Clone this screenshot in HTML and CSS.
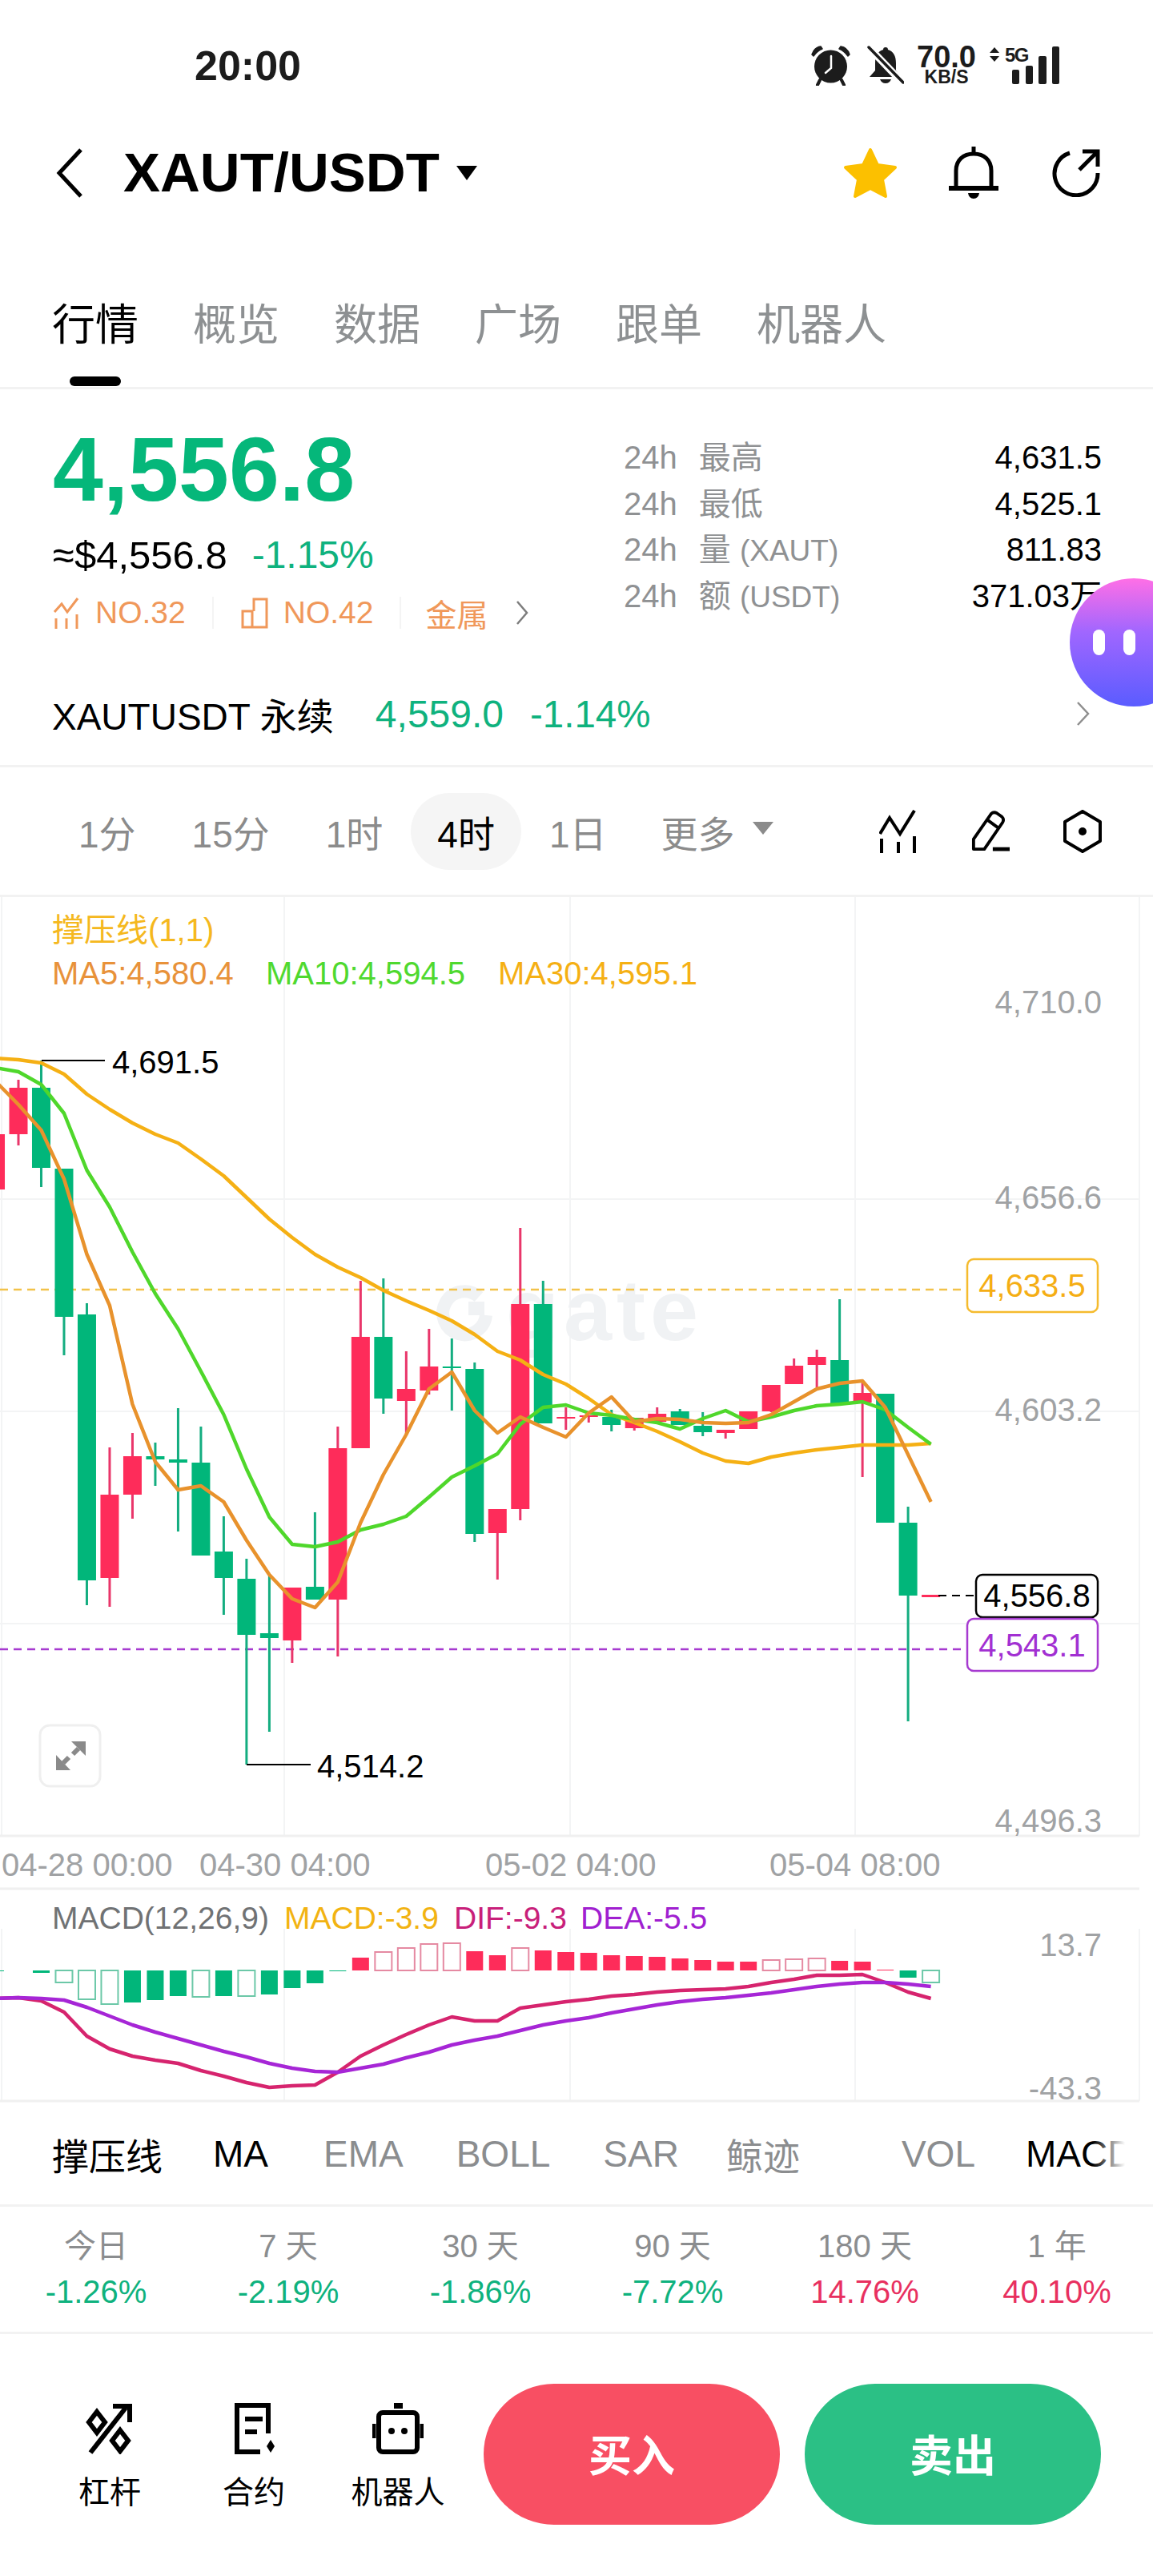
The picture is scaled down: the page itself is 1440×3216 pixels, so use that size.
FILE: index.html
```html
<!DOCTYPE html>
<html lang="zh-CN">
  <head>
    <meta charset="UTF-8">
    <meta name="viewport" content="width=device-width, initial-scale=1.0">
    <title>XAUT/USDT</title>
    <link rel="stylesheet" href="styles.css">
  </head>
  <body>
    <div class="status-bar">
      <span class="time">20:00</span>
      <div class="status-icons">
        <svg class="alarm-icon" viewBox="0 0 50 50">
          <circle cx="24.5" cy="26" r="20.5" fill="#1c1c1c"/>
          <path d="M25 13V28L18 34" fill="none" stroke="#fff" stroke-width="2.5" stroke-linecap="round"/>
          <path d="M1 11Q4 2 12 1L14 4Q8 6 3 13ZM48 11Q45 2 37 1L35 4Q41 6 46 13Z" fill="#1c1c1c" stroke="#1c1c1c" stroke-width="1.5" stroke-linejoin="round"/>
          <path d="M11 43L8 49M38 43L41 49" stroke="#1c1c1c" stroke-width="4" stroke-linecap="round"/>
        </svg>
        <svg class="muted-icon" viewBox="0 0 46 48">
          <path d="M23 2C25 2 26 3 26 5C33 7 36 13 36 22V31L42 39H3L10 31V22C10 13 13 7 20 5C20 3 21 2 23 2Z" fill="#1c1c1c"/>
          <path d="M16 42H30Q28 47 23 47Q18 47 16 42Z" fill="#1c1c1c"/>
          <path d="M0 0L44 46" stroke="#fff" stroke-width="9"/>
          <path d="M2 2L45 46" stroke="#1c1c1c" stroke-width="3.5" stroke-linecap="round"/>
        </svg>
        <div class="net-speed">
          <span class="net-value">70.0</span>
          <span class="net-unit">KB/S</span>
        </div>
        <svg class="net-arrows" viewBox="0 0 12 18">
          <path d="M6 0L12 7H0ZM6 18L12 11H0Z" fill="#1c1c1c"/>
        </svg>
        <svg class="signal-icon" viewBox="0 0 70 51">
          <text class="signal-label" x="0" y="23">5G</text>
          <rect x="9" y="33" width="9" height="18" rx="2"/>
          <rect x="26" y="28" width="9" height="23" rx="2"/>
          <rect x="42" y="16" width="10" height="35" rx="2"/>
          <rect x="59" y="4" width="9" height="47" rx="2"/>
        </svg>
      </div>
    </div>

    <div class="nav">
      <svg class="back-icon" viewBox="0 0 34 62">
        <path d="M31 2L4 31L31 60" fill="none" stroke="#000" stroke-width="5"/>
      </svg>
      <h1 class="pair">XAUT/USDT</h1>
      <svg class="pair-caret" viewBox="0 0 26 18"><path d="M0 0H26L13 18Z" fill="#000"/></svg>
      <div class="nav-actions">
        <svg class="star-icon" viewBox="0 0 68 64">
          <path d="M34 3L43 22L65 25L49 40L53 61L34 51L15 61L19 40L3 25L25 22Z" fill="#fcc000" stroke="#fcc000" stroke-width="4" stroke-linejoin="round"/>
        </svg>
        <svg class="bell-icon" viewBox="0 0 62 66">
          <path d="M31 0V10M9 52V30C9 17 18 9 31 9C44 9 53 17 53 30V52" fill="none" stroke="#000" stroke-width="5"/>
          <path d="M0 49H62V55H0ZM24 58H38Q37 65 31 65Q25 65 24 58Z" fill="#000"/>
        </svg>
        <svg class="share-icon" viewBox="0 0 60 60">
          <path d="M22 5A27 27 0 1 0 57 30" fill="none" stroke="#000" stroke-width="5"/>
          <path d="M34 26L56 4M38 3H57V22" fill="none" stroke="#000" stroke-width="5"/>
        </svg>
      </div>
    </div>

    <div class="tabs">
      <div class="tab tab-active">行情<span class="tab-mark"></span></div>
      <div class="tab">概览</div>
      <div class="tab">数据</div>
      <div class="tab">广场</div>
      <div class="tab">跟单</div>
      <div class="tab">机器人</div>
    </div>

    <div class="summary">
      <div class="summary-left">
        <div class="price">4,556.8</div>
        <div class="price-sub">
          <span>≈$4,556.8</span>
          <span class="up-text price-change">-1.15%</span>
        </div>
        <div class="rank-tags">
          <svg class="rank-icon" viewBox="0 0 34 40">
            <path d="M2 19L11 9L18 19L31 2" fill="none" stroke="#f0985a" stroke-width="3"/>
            <path d="M4 27V40M17 27V40M30 22V40" stroke="#f0985a" stroke-width="3"/>
          </svg>
          <span class="rank-no">NO.32</span>
          <span class="rank-sep"></span>
          <svg class="rank-icon" viewBox="0 0 34 40">
            <path d="M2 38V18H14V38ZM14 38H32V3H16V18" fill="none" stroke="#f0985a" stroke-width="3"/>
          </svg>
          <span class="rank-no">NO.42</span>
          <span class="rank-sep"></span>
          <span class="rank-name">金属</span>
          <svg class="rank-chevron" viewBox="0 0 16 32">
            <path d="M2 2L14 16L2 30" fill="none" stroke="#7d7d7d" stroke-width="2.5"/>
          </svg>
        </div>
      </div>
      <div class="summary-right">
        <div class="stat-row"><span class="stat-period">24h</span><span class="stat-name">最高</span><span class="stat-value">4,631.5</span></div>
        <div class="stat-row"><span class="stat-period">24h</span><span class="stat-name">最低</span><span class="stat-value">4,525.1</span></div>
        <div class="stat-row"><span class="stat-period">24h</span><span class="stat-name">量 <span class="stat-unit">(XAUT)</span></span><span class="stat-value">811.83</span></div>
        <div class="stat-row"><span class="stat-period">24h</span><span class="stat-name">额 <span class="stat-unit">(USDT)</span></span><span class="stat-value">371.03万</span></div>
      </div>
      <div class="assistant">
        <span class="assistant-eye"></span>
        <span class="assistant-eye"></span>
      </div>
    </div>

    <div class="perp-row">
      <span class="perp-name">XAUTUSDT 永续</span>
      <span class="perp-price">4,559.0</span>
      <span class="perp-change">-1.14%</span>
      <svg class="perp-chevron" viewBox="0 0 18 30">
        <path d="M2 1L15 15L2 29" fill="none" stroke="#8f8f8f" stroke-width="2.5"/>
      </svg>
    </div>

    <div class="intervals">
      <span class="interval">1分</span>
      <span class="interval">15分</span>
      <span class="interval">1时</span>
      <span class="interval interval-active">4时</span>
      <span class="interval">1日</span>
      <span class="interval interval-more">更多<svg class="more-caret" viewBox="0 0 26 16"><path d="M0 0H26L13 16Z" fill="#8b8b8b"/></svg></span>
      <div class="chart-tools">
        <svg class="chart-tool" viewBox="0 0 48 54">
          <path d="M1 30L13 10L26 30L44 1" fill="none" stroke="#000" stroke-width="4"/>
          <path d="M3 36V54M24 40V54M44 33V54" stroke="#000" stroke-width="4"/>
        </svg>
        <svg class="chart-tool" viewBox="0 0 50 54">
          <path d="M3 50V37L26 4Q29 1 33 3L40 8Q43 11 41 15L17 50Z" fill="none" stroke="#000" stroke-width="4" stroke-linejoin="round"/>
          <path d="M21 12L36 23" stroke="#000" stroke-width="4"/>
          <path d="M28 50H50" stroke="#000" stroke-width="5"/>
        </svg>
        <svg class="chart-tool" viewBox="0 0 48 54">
          <path d="M24 2L46 15V39L24 52L2 39V15Z" fill="none" stroke="#000" stroke-width="4" stroke-linejoin="round"/>
          <circle cx="24" cy="27" r="5" fill="#000"/>
        </svg>
      </div>
    </div>

    <svg class="chart" viewBox="0 1120 1440 1510">
      <g class="grid">
        <path d="M2 1120V2292M355 1120V2292M712 1120V2292M1068 1120V2292M1423 1120V2292"/>
        <path d="M355 2408V2623M712 2408V2623M1068 2408V2623M1423 2408V2623M2 2408V2623"/>
        <path d="M0 1497H1423M0 1762H1423M0 2027H1423"/>
      </g>
      <g class="grid-strong">
        <path d="M0 2292H1423M0 2358H1423M0 2623H1423"/>
      </g>

      <g class="watermark">
        <path d="M598 1619A27 27 0 1 0 607 1642" fill="none" stroke="#f0f2f4" stroke-width="16"/>
        <rect x="585" y="1625" width="20" height="17" fill="#f0f2f4"/>
        <text x="632" y="1673">gate</text>
      </g>

      <path class="level level-yellow" d="M0 1610H1208"/>
      <path class="level level-purple" d="M0 2059H1208"/>

      <g id="candles"></g>
      <g id="ma-lines"></g>
      <g id="macd-bars"></g>
      <g id="macd-lines"></g>

      <text class="legend legend-sr" x="65" y="1175">撑压线(1,1)</text>
      <text class="legend legend-ma5" x="65" y="1229">MA5:4,580.4</text>
      <text class="legend legend-ma10" x="332" y="1229">MA10:4,594.5</text>
      <text class="legend legend-ma30" x="622" y="1229">MA30:4,595.1</text>

      <text class="axis-label axis-right" x="1376" y="1265">4,710.0</text>
      <text class="axis-label axis-right" x="1376" y="1509">4,656.6</text>
      <text class="axis-label axis-right" x="1376" y="1774">4,603.2</text>
      <text class="axis-label axis-right" x="1376" y="2287">4,496.3</text>

      <path class="marker-line" d="M52 1324H131M308 2203H388"/>
      <text class="marker-text" x="140" y="1340">4,691.5</text>
      <text class="marker-text" x="396" y="2219">4,514.2</text>

      <rect class="price-box box-yellow" x="1208" y="1572" width="163" height="66" rx="8"/>
      <text class="box-text text-yellow" x="1289" y="1619">4,633.5</text>

      <path class="last-dash" d="M1172 1992H1219"/>
      <rect class="price-box box-black" x="1219" y="1966" width="152" height="53" rx="8"/>
      <text class="box-text text-black" x="1295" y="2006">4,556.8</text>

      <rect class="price-box box-purple" x="1208" y="2021" width="163" height="65" rx="8"/>
      <text class="box-text text-purple" x="1289" y="2068">4,543.1</text>

      <rect class="expand-box" x="50" y="2154" width="75" height="76" rx="12"/>
      <path class="expand-arrows" d="M89 2174H107V2192ZM70 2191V2210H88Z"/>
      <path class="expand-stems" d="M98 2183L91 2190M79 2201L86 2194"/>

      <text class="axis-label" x="2" y="2342">04-28 00:00</text>
      <text class="axis-label" x="249" y="2342">04-30 04:00</text>
      <text class="axis-label" x="606" y="2342">05-02 04:00</text>
      <text class="axis-label" x="961" y="2342">05-04 08:00</text>

      <text class="macd-legend legend-gray" x="65" y="2408">MACD(12,26,9)</text>
      <text class="macd-legend legend-yellow" x="355" y="2408">MACD:-3.9</text>
      <text class="macd-legend legend-pink" x="567" y="2408">DIF:-9.3</text>
      <text class="macd-legend legend-violet" x="725" y="2408">DEA:-5.5</text>

      <text class="axis-label axis-right" x="1376" y="2442">13.7</text>
      <text class="axis-label axis-right" x="1376" y="2621">-43.3</text>
    </svg>

    <div class="indicators">
      <span class="indicator indicator-on indicator-first">撑压线</span>
      <span class="indicator indicator-on indicator-ma">MA</span>
      <span class="indicator">EMA</span>
      <span class="indicator">BOLL</span>
      <span class="indicator">SAR</span>
      <span class="indicator indicator-whale">鲸迹</span>
      <span class="indicator-sep"></span>
      <span class="indicator">VOL</span>
      <span class="indicator indicator-on indicator-macd">MACD</span>
    </div>

    <div class="periods">
      <div class="period"><span class="period-name">今日</span><span class="up-text">-1.26%</span></div>
      <div class="period"><span class="period-name">7 天</span><span class="up-text">-2.19%</span></div>
      <div class="period"><span class="period-name">30 天</span><span class="up-text">-1.86%</span></div>
      <div class="period"><span class="period-name">90 天</span><span class="up-text">-7.72%</span></div>
      <div class="period"><span class="period-name">180 天</span><span class="down-text">14.76%</span></div>
      <div class="period"><span class="period-name">1 年</span><span class="down-text">40.10%</span></div>
    </div>

    <div class="footer">
      <div class="tool">
        <svg class="tool-icon" viewBox="0 0 64 64">
          <path d="M8 62L52 6" stroke="#000" stroke-width="6"/>
          <path d="M36 4H57V24" fill="none" stroke="#000" stroke-width="6"/>
          <path d="M16 11L26 24L16 37L6 24ZM45 34L55 47L45 60L35 47Z" fill="none" stroke="#000" stroke-width="6"/>
        </svg>
        <span>杠杆</span>
      </div>
      <div class="tool">
        <svg class="tool-icon" viewBox="0 0 64 64">
          <path d="M50 38V3H11V61H40" fill="none" stroke="#000" stroke-width="6"/>
          <path d="M21 20H43M21 36H36" stroke="#000" stroke-width="6"/>
          <path d="M53 46L58 54L53 62L48 54Z" fill="#000"/>
        </svg>
        <span>合约</span>
      </div>
      <div class="tool">
        <svg class="tool-icon" viewBox="0 0 64 64">
          <rect x="27" y="0" width="11" height="7" fill="#000"/>
          <rect x="8" y="12" width="48" height="49" rx="5" fill="none" stroke="#000" stroke-width="6"/>
          <path d="M2 26V44M62 26V44" stroke="#000" stroke-width="5"/>
          <circle cx="24" cy="35" r="4" fill="#000"/>
          <circle cx="40" cy="35" r="4" fill="#000"/>
        </svg>
        <span>机器人</span>
      </div>
      <div class="trade-btn buy-btn">买入</div>
      <div class="trade-btn sell-btn">卖出</div>
    </div>

    <script src="chart.js"></script>
  </body>
</html>
```

FILE: styles.css
```css
* {
  box-sizing: border-box;
}
html, body {
  margin: 0;
  padding: 0;
}
body {
  width: 1440px;
  height: 3216px;
  overflow: hidden;
  background: #fff;
  color: #000;
  font-family: "Liberation Sans", "Noto Sans CJK SC", sans-serif;
}
svg {
  display: block;
  flex-shrink: 0;
}

/* status bar */
.status-bar {
  display: flex;
  height: 130px;
  padding: 56px 115px 0 243px;
}
.time {
  font-size: 52px;
  font-weight: bold;
  line-height: 52px;
  color: #1c1c1c;
}
.status-icons {
  display: flex;
  margin-left: auto;
  padding-top: 1px;
}
.alarm-icon {
  width: 50px;
  height: 50px;
}
.muted-icon {
  width: 46px;
  height: 48px;
  margin-left: 20px;
}
.net-speed {
  display: flex;
  flex-direction: column;
  align-items: center;
  width: 78px;
  margin-left: 14px;
  color: #1c1c1c;
  font-weight: bold;
}
.net-value {
  font-size: 38px;
  line-height: 29px;
}
.net-unit {
  font-size: 23px;
  line-height: 20px;
}
.net-arrows {
  width: 12px;
  height: 18px;
  margin: 2px 0 0 15px;
}
.signal-icon {
  width: 70px;
  height: 51px;
  margin: -3px 0 0 7px;
  fill: #1c1c1c;
}
.signal-label {
  font-size: 24px;
  font-weight: bold;
  letter-spacing: -1.5px;
}

/* nav */
.nav {
  display: flex;
  align-items: center;
  height: 170px;
  padding: 2px 66px 0 70px;
}
.back-icon {
  width: 34px;
  height: 62px;
}
.pair {
  margin: 0 0 0 50px;
  font-size: 69px;
  font-weight: bold;
  line-height: 80px;
}
.pair-caret {
  width: 26px;
  height: 18px;
  margin-left: 21px;
}
.nav-actions {
  display: flex;
  align-items: center;
  margin-left: auto;
}
.star-icon {
  width: 68px;
  height: 64px;
}
.bell-icon {
  width: 62px;
  height: 66px;
  margin-left: 64px;
}
.share-icon {
  width: 60px;
  height: 60px;
  margin-left: 67px;
}

/* tabs */
.tabs {
  display: flex;
  gap: 68px;
  height: 186px;
  padding: 76px 0 0 65px;
  border-bottom: 3px solid #f2f2f2;
}
.tab {
  display: flex;
  flex-direction: column;
  align-items: center;
  font-size: 54px;
  line-height: 60px;
  color: #8d9092;
}
.tab-active {
  color: #000;
}
.tab-mark {
  width: 64px;
  height: 12px;
  margin-top: 34px;
  border-radius: 6px;
  background: #000;
}

/* price summary */
.summary {
  position: relative;
  display: flex;
  height: 344px;
  padding: 40px 64px 0 66px;
}
.summary-left {
  width: 713px;
}
.price {
  font-size: 113px;
  font-weight: bold;
  line-height: 120px;
  color: #05b77a;
}
.price-sub {
  display: flex;
  gap: 31px;
  margin-top: 19px;
  font-size: 49px;
  line-height: 56px;
}
.price-change {
  font-size: 48px;
}
.up-text {
  color: #0fb27e;
}
.down-text {
  color: #e8305f;
}
.rank-tags {
  display: flex;
  align-items: center;
  height: 50px;
  margin-top: 19px;
  font-size: 39px;
  color: #f0985a;
}
.rank-icon {
  width: 34px;
  height: 40px;
}
.rank-no {
  margin-left: 19px;
}
.rank-sep {
  width: 2px;
  height: 40px;
  margin: 0 34px 0 33px;
  background: #f4f4f4;
}
.rank-name {
  margin-left: -4px;
}
.rank-chevron {
  width: 16px;
  height: 32px;
  margin-left: 35px;
}
.summary-right {
  width: 597px;
  padding-top: 17px;
}
.stat-row {
  display: flex;
  height: 57.6px;
  font-size: 40px;
  line-height: 57px;
  color: #8f9193;
}
.stat-name {
  margin-left: 27px;
}
.stat-unit {
  font-size: 37px;
}
.stat-value {
  margin-left: auto;
  color: #000;
}
.assistant {
  position: absolute;
  top: 236px;
  left: 1336px;
  display: flex;
  gap: 23px;
  align-items: center;
  width: 160px;
  height: 160px;
  padding-left: 29px;
  border-radius: 80px;
  background: linear-gradient(180deg, #ff6fe6 0%, #a066ff 42%, #5a5cff 100%);
}
.assistant-eye {
  width: 15px;
  height: 32px;
  border-radius: 8px;
  background: #fff;
}

/* perpetual row */
.perp-row {
  display: flex;
  align-items: center;
  height: 128px;
  padding: 0 78px 3px 65px;
  border-bottom: 3px solid #f2f2f2;
  font-size: 46px;
}
.perp-price {
  margin-left: 52px;
  font-size: 48px;
  color: #0fb27e;
}
.perp-change {
  margin-left: 33px;
  font-size: 47.5px;
  color: #0fb27e;
}
.perp-chevron {
  width: 18px;
  height: 30px;
  margin-left: auto;
}

/* interval row */
.intervals {
  display: flex;
  align-items: center;
  height: 162px;
  padding: 0 64px 0 63px;
  border-bottom: 3px solid #f2f2f2;
}
.interval {
  display: flex;
  align-items: center;
  height: 96px;
  padding: 0 35px;
  font-size: 46px;
  color: #8b8b8b;
}
.interval-active {
  padding: 0 33px;
  border-radius: 48px;
  background: #f5f5f5;
  color: #000;
}
.interval-more {
  margin-left: -2px;
}
.more-caret {
  width: 26px;
  height: 16px;
  margin: -8px 0 0 22px;
}
.chart-tools {
  display: flex;
  align-items: center;
  gap: 67px;
  margin-left: auto;
}
.chart-tool {
  width: 48px;
  height: 54px;
}

/* chart */
.chart {
  width: 1440px;
  height: 1510px;
}
.grid path {
  fill: none;
  stroke: #f3f4f5;
  stroke-width: 2;
}
.grid-strong path {
  fill: none;
  stroke: #f0f0f0;
  stroke-width: 3;
}
.watermark text {
  font-size: 108px;
  font-weight: bold;
  letter-spacing: 6px;
  fill: #f0f2f4;
}
.level {
  fill: none;
  stroke-width: 2.5;
  stroke-dasharray: 10 7;
}
.level-yellow {
  stroke: #f2c24a;
}
.level-purple {
  stroke: #a63ad0;
}
.candle-up {
  fill: #01b67a;
}
.candle-down {
  fill: #fe2c5a;
}
.wick-up {
  fill: #14ad80;
}
.wick-down {
  fill: #e9366a;
}
.ma-line {
  fill: none;
  stroke-width: 4.5;
  stroke-linejoin: round;
}
.ma5 {
  stroke: #e8922c;
}
.ma10 {
  stroke: #4fd72b;
}
.ma30 {
  stroke: #f5b014;
}
.bar-hollow-up {
  fill: none;
  stroke: #6cc8a8;
  stroke-width: 2;
}
.bar-hollow-down {
  fill: none;
  stroke: #e58aa2;
  stroke-width: 2;
}
.macd-line {
  fill: none;
  stroke-width: 4.5;
  stroke-linejoin: round;
}
.macd-dif {
  stroke: #d6246e;
}
.macd-dea {
  stroke: #a626d6;
}
.legend {
  font-size: 40px;
}
.legend-sr {
  fill: #f5b81e;
}
.legend-ma5 {
  fill: #e8923a;
}
.legend-ma10 {
  fill: #4fd92f;
}
.legend-ma30 {
  fill: #f5b014;
}
.axis-label {
  font-size: 40px;
  fill: #a0a2a4;
}
.axis-right {
  text-anchor: end;
}
.marker-line {
  fill: none;
  stroke: #000;
  stroke-width: 2;
}
.marker-text {
  font-size: 40px;
  fill: #000;
}
.price-box {
  fill: #fff;
  stroke-width: 2.5;
}
.box-yellow {
  stroke: #f5bb2e;
}
.box-black {
  stroke: #000;
}
.box-purple {
  stroke: #a63ad0;
}
.box-text {
  font-size: 40px;
  text-anchor: middle;
}
.text-yellow {
  fill: #f5ae14;
}
.text-black {
  fill: #000;
}
.text-purple {
  fill: #a230d2;
}
.last-dash {
  fill: none;
  stroke: #000;
  stroke-width: 2;
  stroke-dasharray: 10 7;
}
.expand-box {
  fill: #fff;
  stroke: #efefef;
  stroke-width: 3;
}
.expand-arrows {
  fill: #8a8a8a;
}
.expand-stems {
  fill: none;
  stroke: #8a8a8a;
  stroke-width: 6;
}
.macd-legend {
  font-size: 39px;
}
.legend-gray {
  fill: #707274;
}
.legend-yellow {
  fill: #f2b312;
}
.legend-pink {
  fill: #c8207a;
}
.legend-violet {
  fill: #a020d0;
}

/* indicator tabs */
.indicators {
  position: relative;
  display: flex;
  align-items: center;
  gap: 66px;
  width: 1405px;
  height: 122px;
  padding: 0 0 4px 65px;
  overflow: hidden;
  font-size: 46px;
  color: #8b8d8f;
  white-space: nowrap;
}
.indicators::after {
  content: "";
  position: absolute;
  top: 0;
  right: 0;
  width: 40px;
  height: 100%;
  background: linear-gradient(90deg, rgba(255, 255, 255, 0), #fff);
}
.indicator-on {
  color: #000;
}
.indicator-first {
  margin-right: -3px;
}
.indicator-ma {
  margin-right: 3px;
}
.indicator-whale {
  margin-left: -7px;
}
.indicator-macd {
  margin-left: -3px;
}
.indicator-sep {
  width: 2px;
  height: 48px;
  margin: 0 3px 0 -8px;
  background: #f2f2f2;
}

/* change periods */
.periods {
  display: grid;
  grid-template-columns: repeat(6, 1fr);
  height: 162px;
  padding-top: 26px;
  border-top: 3px solid #f2f2f2;
  border-bottom: 3px solid #f2f2f2;
}
.period {
  display: flex;
  flex-direction: column;
  align-items: center;
  font-size: 40px;
  line-height: 46px;
}
.period-name {
  margin-bottom: 11px;
  color: #8b8d8f;
}

/* footer */
.footer {
  display: flex;
  align-items: flex-start;
  padding: 62px 0 0 47px;
}
.tool {
  display: flex;
  flex-direction: column;
  align-items: center;
  width: 180px;
  padding-top: 24px;
  font-size: 39px;
  line-height: 40px;
}
.tool-icon {
  width: 64px;
  height: 64px;
  margin-bottom: 28px;
}
.trade-btn {
  display: flex;
  align-items: center;
  justify-content: center;
  width: 370px;
  height: 176px;
  padding-bottom: 3px;
  border-radius: 88px;
  color: #fff;
  font-size: 54px;
  font-weight: bold;
}
.buy-btn {
  margin-left: 17px;
  background: #f84f63;
}
.sell-btn {
  margin-left: 31px;
  background: #2bc085;
}
```

FILE: chart.js
```js
const NS = 'http://www.w3.org/2000/svg';

function xOf(i) {
  return 23 + 28.49 * i;
}

function add(parent, tag, attrs) {
  const el = document.createElementNS(NS, tag);
  for (const key in attrs) el.setAttribute(key, attrs[key]);
  parent.appendChild(el);
  return el;
}

// up/down, body top, body bottom, wick top, wick bottom (page y, first one is i = -1)
const candles = [
  ['d', 1416, 1485, 1416, 1485],
  ['d', 1358, 1416, 1348, 1430],
  ['u', 1358, 1458, 1324, 1482],
  ['u', 1459, 1644, 1459, 1692],
  ['u', 1641, 1973, 1627, 2004],
  ['d', 1866, 1970, 1807, 2006],
  ['d', 1818, 1866, 1789, 1896],
  ['u', 1818, 1822, 1801, 1855],
  ['u', 1822, 1826, 1758, 1912],
  ['u', 1826, 1942, 1781, 1942],
  ['u', 1937, 1970, 1893, 2016],
  ['u', 1971, 2041, 1946, 2203],
  ['u', 2039, 2045, 1968, 2162],
  ['d', 1982, 2048, 1982, 2076],
  ['u', 1981, 1997, 1888, 1997],
  ['d', 1808, 1997, 1781, 2068],
  ['d', 1669, 1808, 1599, 1808],
  ['u', 1669, 1746, 1596, 1765],
  ['d', 1734, 1749, 1687, 1791],
  ['d', 1706, 1736, 1659, 1741],
  ['u', 1706, 1708, 1671, 1761],
  ['u', 1709, 1915, 1701, 1925],
  ['d', 1884, 1914, 1884, 1972],
  ['d', 1628, 1884, 1533, 1898],
  ['u', 1628, 1777, 1599, 1777],
  ['d', 1769, 1771, 1757, 1785],
  ['d', 1767, 1769, 1767, 1776],
  ['u', 1769, 1779, 1760, 1787],
  ['d', 1770, 1783, 1770, 1786],
  ['d', 1765, 1775, 1757, 1775],
  ['u', 1762, 1779, 1759, 1779],
  ['u', 1780, 1788, 1763, 1793],
  ['d', 1785, 1789, 1785, 1796],
  ['d', 1762, 1784, 1762, 1784],
  ['d', 1729, 1762, 1729, 1763],
  ['d', 1705, 1728, 1696, 1728],
  ['d', 1694, 1704, 1685, 1732],
  ['u', 1698, 1753, 1622, 1753],
  ['d', 1739, 1751, 1726, 1844],
  ['u', 1740, 1901, 1740, 1901],
  ['u', 1901, 1992, 1881, 2149],
  ['d', 1991, 1994, 1991, 1994]
];

const candleGroup = document.getElementById('candles');
candles.forEach((c, n) => {
  const x = xOf(n - 1);
  add(candleGroup, 'rect', { class: c[0] === 'u' ? 'wick-up' : 'wick-down', x: x - 1.5, y: c[3], width: 3, height: c[4] - c[3] });
  add(candleGroup, 'rect', { class: c[0] === 'u' ? 'candle-up' : 'candle-down', x: x - 11.5, y: c[1], width: 23, height: c[2] - c[1] });
});

function drawLine(parent, cls, ys) {
  const pts = ys.map((y, n) => xOf(n - 1).toFixed(1) + ',' + y).join(' ');
  add(parent, 'polyline', { class: cls, points: pts });
}

const maGroup = document.getElementById('ma-lines');
drawLine(maGroup, 'ma-line ma30', [1321, 1323, 1327, 1341, 1366, 1385, 1402, 1416, 1427, 1447, 1468, 1495, 1522, 1545, 1566, 1582, 1595, 1611, 1624, 1636, 1649, 1666, 1687, 1698, 1716, 1728, 1746, 1766, 1776, 1787, 1800, 1814, 1824, 1827, 1819, 1814, 1810, 1807, 1804, 1804, 1804, 1802]);
drawLine(maGroup, 'ma-line ma10', [1333, 1338, 1354, 1390, 1461, 1507, 1563, 1615, 1659, 1712, 1766, 1834, 1894, 1928, 1931, 1925, 1910, 1903, 1893, 1869, 1844, 1830, 1815, 1778, 1757, 1754, 1764, 1767, 1772, 1776, 1784, 1771, 1761, 1775, 1769, 1761, 1755, 1753, 1750, 1760, 1782, 1803]);
drawLine(maGroup, 'ma-line ma5', [1350, 1379, 1411, 1472, 1566, 1630, 1753, 1825, 1860, 1855, 1875, 1923, 1966, 1996, 2007, 1975, 1901, 1841, 1791, 1734, 1713, 1761, 1789, 1769, 1782, 1794, 1764, 1744, 1775, 1771, 1772, 1776, 1777, 1776, 1766, 1750, 1734, 1727, 1724, 1757, 1816, 1875]);

// histogram heights above (+) or below (-) the zero line, h marks a hollow bar
const macdZero = 2460;
const bars = [
  [-1, -1], [1, -3], [2, -15, 'h'], [3, -36, 'h'], [4, -42, 'h'], [5, -40], [6, -37], [7, -32],
  [8, -33, 'h'], [9, -32], [10, -32, 'h'], [11, -30], [12, -22], [13, -16], [14, -1],
  [15, 16], [16, 23, 'h'], [17, 28, 'h'], [18, 33, 'h'], [19, 34, 'h'], [20, 24], [21, 19],
  [22, 28, 'h'], [23, 25], [24, 23], [25, 22], [26, 19], [27, 18], [28, 17], [29, 15], [30, 13],
  [31, 11], [32, 11], [33, 13, 'h'], [34, 14, 'h'], [35, 15, 'h'], [36, 12], [37, 11], [38, 1],
  [39, -9], [40, -15, 'h']
];

const barGroup = document.getElementById('macd-bars');
bars.forEach(b => {
  const up = b[1] < 0;
  const cls = b[2] ? (up ? 'bar-hollow-up' : 'bar-hollow-down') : (up ? 'candle-up' : 'candle-down');
  const h = Math.abs(b[1]);
  add(barGroup, 'rect', {
    class: cls,
    x: xOf(b[0]) - 10.5,
    y: up ? macdZero : macdZero - h,
    width: 21,
    height: h
  });
});

const macdGroup = document.getElementById('macd-lines');
drawLine(macdGroup, 'macd-line macd-dif', [2495, 2494, 2498, 2512, 2542, 2558, 2567, 2572, 2576, 2585, 2592, 2600, 2606, 2604, 2603, 2587, 2567, 2553, 2540, 2528, 2518, 2523, 2523, 2507, 2503, 2499, 2496, 2492, 2490, 2487, 2485, 2484, 2483, 2480, 2475, 2471, 2466, 2466, 2465, 2475, 2487, 2495]);
drawLine(macdGroup, 'macd-line macd-dea', [2495, 2494, 2495, 2497, 2506, 2517, 2528, 2537, 2545, 2553, 2561, 2568, 2576, 2582, 2586, 2587, 2582, 2577, 2569, 2562, 2553, 2547, 2542, 2535, 2528, 2523, 2519, 2513, 2508, 2503, 2499, 2496, 2494, 2491, 2488, 2484, 2480, 2477, 2475, 2475, 2477, 2480]);
```
